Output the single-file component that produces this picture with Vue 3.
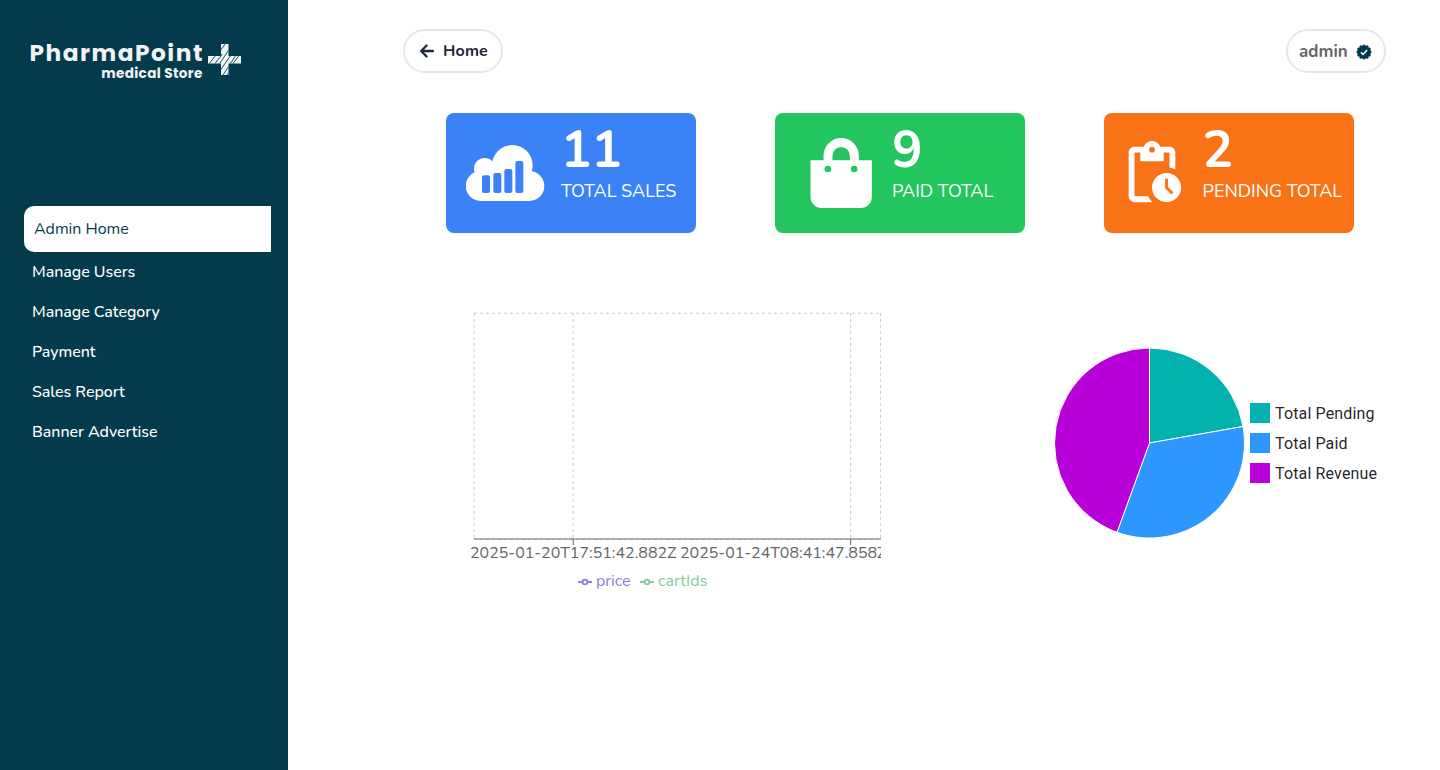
<script setup>
const menu = [
  { label: 'Admin Home', active: true },
  { label: 'Manage Users' },
  { label: 'Manage Category' },
  { label: 'Payment' },
  { label: 'Sales Report' },
  { label: 'Banner Advertise' },
]

const cx = 94.5
const cy = 95
const r = 95
const at = (deg) => {
  const a = (deg * Math.PI) / 180
  return `${cx + r * Math.sin(a)} ${cy - r * Math.cos(a)}`
}
const slice = (from, to) =>
  `M${cx} ${cy}L${at(from)}A${r} ${r} 0 ${to - from > 180 ? 1 : 0} 1 ${at(to)}Z`
const slices = [
  { label: 'Total Pending', color: '#02b2af', d: slice(0, 80), w: 99.5 },
  { label: 'Total Paid', color: '#2e96ff', d: slice(80, 200), w: 72.5 },
  { label: 'Total Revenue', color: '#b800d8', d: slice(200, 360), w: 102 },
]

const bumps = Array.from({ length: 12 }, (_, i) => {
  const a = (i * Math.PI) / 6
  return { x: 8 + 6.1 * Math.sin(a), y: 8 - 6.1 * Math.cos(a) }
})
</script>

<template>
  <div class="layout">
    <aside class="sidebar">
      <div class="brand">
        <svg width="216" height="42" viewBox="0 0 216 42">
          <defs>
            <clipPath id="cross"><path d="M193 5h7.5v12h12.5v7.5h-12.5v11.500h-7.500v-11.500h-13v-7.500h13z" /></clipPath>
          </defs>
          <g fill="#f1f3f4" class="logo-text">
            <text x="1.4" y="22" font-size="23.3" textLength="173" lengthAdjust="spacing">PharmaPoint</text>
            <text x="73.3" y="38.8" font-size="13.6" textLength="101" lengthAdjust="spacing">medical Store</text>
          </g>
          <g clip-path="url(#cross)">
            <rect x="179" y="4" width="36" height="33" fill="#f1f3f4" />
            <path
              d="M181 25l7-9M186.500 25l8-10M191 25.500l12-18M192 12l6-8M191 33l12-17M195 36l13-20M198 37l5-6M204.500 25l7-9"
              fill="none"
              stroke="#1f5365"
              stroke-width="1"
            />
          </g>
        </svg>
      </div>
      <nav>
        <a v-for="m in menu" :key="m.label" :class="{ active: m.active }"><span>{{ m.label }}</span></a>
      </nav>
    </aside>

    <main>
      <header>
        <button class="pill home">
          <svg width="14" height="14" viewBox="0 0 14 14" fill="none" stroke="#1f2937" stroke-width="2.3" stroke-linecap="round" stroke-linejoin="round">
            <path d="M6.600 1.500L1.200 7l5.400 5.500M1.400 7H12.900" />
          </svg>
          <span>Home</span>
        </button>
        <div class="pill user">
          <span>admin</span>
          <svg width="16" height="16" viewBox="0 0 16 16">
            <g fill="#033b4c">
              <circle cx="8" cy="8" r="6.5" />
              <circle v-for="(b, i) in bumps" :key="i" :cx="b.x" :cy="b.y" r="1.5" />
            </g>
            <path d="M4.900 8.400l2.100 2 4.100-4.300" fill="none" stroke="#fff" stroke-width="1.5" />
          </svg>
        </div>
      </header>

      <section class="cards">
        <div class="card blue">
          <svg class="icon" width="79" height="56" viewBox="78 120 237 168" fill="#fff">
            <circle cx="217" cy="181" r="61" />
            <circle cx="134" cy="191" r="32" />
            <circle cx="122" cy="243" r="45" />
            <circle cx="268" cy="243" r="45" />
            <rect x="122" y="195" width="146" height="93" />
            <g fill="#3b82f6">
              <rect x="126" y="211" width="24" height="53" rx="6" />
              <rect x="160" y="204" width="24" height="60" rx="6" />
              <rect x="193" y="192" width="24" height="72" rx="6" />
              <rect x="226" y="168" width="24" height="96" rx="6" />
            </g>
          </svg>
          <div class="figures"><strong>11</strong><span>TOTAL SALES</span></div>
        </div>
        <div class="card green">
          <svg class="icon" width="62" height="70" viewBox="120 98 185 210" fill="#fff">
            <path
              fill-rule="evenodd"
              d="M121 165h39v-14a53 53 0 0 1 106 0v14h39v110a33 33 0 0 1-33 33H154a33 33 0 0 1-33-33zM187 165h52v-14a26 26 0 0 0-52 0zM163 191a10 10 0 1 0 20 0a10 10 0 1 0-20 0M242 191a10 10 0 1 0 20 0a10 10 0 1 0-20 0"
            />
          </svg>
          <div class="figures"><strong>9</strong><span>PAID TOTAL</span></div>
        </div>
        <div class="card orange">
          <svg class="icon" width="70" height="70" viewBox="0 0 24 24" fill="#fff">
            <path
              d="M17 12c-2.76 0-5 2.24-5 5s2.24 5 5 5 5-2.24 5-5-2.24-5-5-5zm1.65 7.35L16.5 17.2V14h1v2.79l1.85 1.85-.7.71zM18 3h-3.18C14.4 1.84 13.3 1 12 1s-2.4.84-2.82 2H6c-1.1 0-2 .9-2 2v15c0 1.1.9 2 2 2h6.11a6.743 6.743 0 0 1-1.42-2H6V5h2v3h8V5h2v5.08c.71.1 1.38.31 2 .6V5c0-1.1-.9-2-2-2zm-6 2c-.55 0-1-.45-1-1s.45-1 1-1 1 .45 1 1-.45 1-1 1z"
            />
          </svg>
          <div class="figures"><strong>2</strong><span>PENDING TOTAL</span></div>
        </div>
      </section>

      <section class="charts">
        <svg class="line-chart" width="413" height="290" viewBox="0 0 413 290">
          <g stroke="#ccc" stroke-dasharray="3 3" fill="none">
            <path d="M6 5.2H413M6 231H413M6 5V231M105.2 5V231M382.6 5V231M412.6 5V231" />
          </g>
          <path d="M6 231H413M105.2 231v6M382.6 231v6" stroke="#666" fill="none" />
          <g font-size="16" fill="#666">
            <text x="2" y="250" textLength="206.5">2025-01-20T17:51:42.882Z</text>
            <text x="212" y="250" textLength="206.5">2025-01-24T08:41:47.858Z</text>
          </g>
          <g fill="none" stroke-width="1.8" stroke="#8884d8">
            <path d="M110 274h4.7M119.3 274h4.7" /><circle cx="117" cy="274" r="2.4" />
          </g>
          <text x="128" y="278" font-size="16" fill="#8884d8" textLength="34.5">price</text>
          <g fill="none" stroke-width="1.8" stroke="#82ca9d">
            <path d="M172 274h4.7M181.3 274h4.7" /><circle cx="179" cy="274" r="2.4" />
          </g>
          <text x="190" y="278" font-size="16" fill="#82ca9d" textLength="49.5">cartIds</text>
        </svg>

        <div class="pie">
          <svg width="190" height="190" viewBox="0 0 190 190">
            <path v-for="s in slices" :key="s.label" :d="s.d" :fill="s.color" stroke="#fff" stroke-linejoin="round" />
          </svg>
          <ul>
            <li v-for="s in slices" :key="s.label">
              <svg width="130" height="20">
                <rect width="20" height="20" :fill="s.color" />
                <text x="25" y="16" font-size="16" fill="rgba(0,0,0,.87)" :textLength="s.w">{{ s.label }}</text>
              </svg>
            </li>
          </ul>
        </div>
      </section>
    </main>
  </div>
</template>

<style>
body {
  margin: 0;
  overflow: hidden;
}
</style>

<style scoped>
.layout {
  display: flex;
  width: 1440px;
  height: 770px;
  background: #fff;
  font-family: Nunito, Lato, sans-serif;
  font-size: 16px;
}
svg {
  display: block;
  flex: none;
}
.sidebar {
  box-sizing: border-box;
  width: 288px;
  padding: 39px 17px 0 24px;
  background: #033b4c;
}
.brand {
  height: 167px;
  padding-left: 4px;
}
.brand svg {
  overflow: visible;
}
.logo-text {
  font-family: Poppins, Inter, sans-serif;
  font-weight: 700;
}
nav {
  display: flex;
  flex-direction: column;
}
nav a {
  display: flex;
  align-items: center;
  height: 40px;
  padding-left: 8px;
  color: #fff;
  font-weight: 500;
  letter-spacing: -0.04px;
}
nav a.active {
  height: 46px;
  padding-left: 10px;
  color: #033b4c;
  background: #fff;
  border-radius: 10px 0 0 10px;
  font-weight: 400;
  letter-spacing: 0;
}
main {
  flex: 1;
}
header {
  display: flex;
  justify-content: space-between;
  padding: 29px 54px 0 115px;
}
.pill {
  box-sizing: border-box;
  display: flex;
  align-items: center;
  width: 100px;
  height: 44px;
  border: 2px solid #e5e7eb;
  border-radius: 22px;
  background: #fff;
  padding: 0;
  font-family: inherit;
  font-size: 16px;
  font-weight: 700;
}
.home {
  padding-left: 15px;
  gap: 9px;
  color: #1f2937;
  letter-spacing: 0.15px;
}
.user {
  padding-left: 11px;
  gap: 8px;
  color: #666;
  font-size: 17px;
}
.user svg {
  margin-top: 1px;
}
.cards {
  display: flex;
  gap: 79px;
  padding: 40px 0 0 158px;
}
.card {
  box-sizing: border-box;
  display: flex;
  align-items: flex-start;
  width: 250px;
  height: 120px;
  border-radius: 8px;
  color: #fff;
}
.blue {
  padding: 32px 0 0 20px;
  background: #3b82f6;
}
.green {
  padding: 25px 0 0 35px;
  background: #22c55e;
}
.orange {
  padding: 25px 0 0 13px;
  background: #f97316;
}
.figures {
  display: flex;
  flex-direction: column;
  margin-left: 16px;
  white-space: nowrap;
}
.blue .figures {
  margin-top: -19px;
}
.green .figures,
.orange .figures {
  margin-top: -12px;
}
.green .figures {
  margin-left: 20px;
}
.orange .figures {
  margin-left: 15.5px;
}
.figures strong {
  font-size: 51px;
  line-height: 49px;
  font-weight: 700;
}
.figures span {
  font-size: 18px;
  line-height: 28px;
  margin-top: 2px;
}
.charts {
  display: flex;
  align-items: flex-start;
  padding: 75px 0 0 181px;
}
.line-chart {
  margin-left: -1px;
  overflow: hidden;
}
.pie {
  display: flex;
  align-items: center;
  gap: 5px;
  margin: 40px 0 0 174px;
  font-family: Roboto, sans-serif;
}
ul {
  display: flex;
  flex-direction: column;
  gap: 10px;
  margin: 0;
  padding: 0;
  list-style: none;
}
</style>
